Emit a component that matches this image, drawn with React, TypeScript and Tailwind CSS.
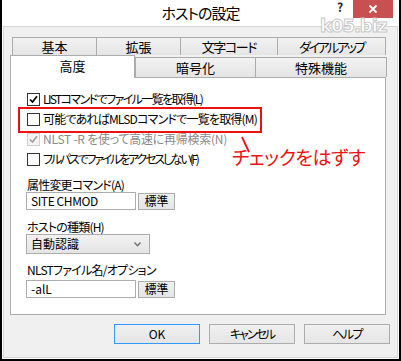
import React from 'react';

const font = "font-['Meiryo_UI','Noto_Sans_CJK_JP',sans-serif] [font-feature-settings:'palt']";

function Check({ checked, disabled }: { checked?: boolean; disabled?: boolean }) {
  return (
    <span
      className={`w-[13px] h-[13px] border shrink-0 flex items-center justify-center ${
        disabled ? 'border-[#d0d0d0] bg-[#f4f4f4]' : 'border-[#333333] bg-white'
      }`}
    >
      {checked && (
        <svg width="9" height="9" viewBox="0 0 9 9">
          <path d="M1 4.5 L3.5 7 L8 1.2" stroke={disabled ? '#a0a0a0' : '#000'} strokeWidth="1.7" fill="none" />
        </svg>
      )}
    </span>
  );
}

function Tab({ label, w, active, track = '' }: { label: string; w: string; active?: boolean; track?: string }) {
  return (
    <div
      className={`${w} ${track} -ml-px first:ml-0 border border-b-0 border-[#acacac] flex items-center justify-center text-[13px] text-black ${
        active ? 'h-[23px] bg-white relative z-10 -mb-px pb-[3px]' : 'h-full bg-gradient-to-b from-[#f2f2f2] to-[#e5e5e5]'
      }`}
    >
      {label}
    </div>
  );
}

function Btn({ label, w, focus, track = '' }: { label: string; w: string; focus?: boolean; track?: string }) {
  return (
    <div
      className={`${w} ${track} border ${focus ? 'border-[#3399ff]' : 'border-[#acacac]'} bg-gradient-to-b from-[#f0f0f0] to-[#e5e5e5] flex items-center justify-center text-[12px] text-black`}
    >
      {label}
    </div>
  );
}

export default function App() {
  return (
    <div className={`w-[401px] h-[361px] bg-white border-l-2 border-r-2 border-b-2 border-black flex flex-col relative ${font}`}>
      <div className="h-[26px] flex items-center justify-center text-[15px] tracking-[-1px] text-black shrink-0">
        ホストの設定
      </div>
      <span className="absolute left-[335px] top-0 text-[12px] leading-[14px] font-bold text-[#222]">?</span>
      <div className="absolute left-[351px] top-0 w-[40px] h-[18px] bg-[#c75050] flex items-center justify-center">
        <svg width="10" height="10" viewBox="0 0 10 10">
          <path d="M1.5 1.5 L8.5 8.5 M8.5 1.5 L1.5 8.5" stroke="#fff" strokeWidth="1.8" />
        </svg>
      </div>

      <div className="flex-1 mx-px mb-px border border-[#d6d6d6] bg-[#f0f0f0] flex flex-col">
        <div className="pl-[6px] pt-[10px]">
          <div className="flex h-[18px] ml-[2px]">
            <Tab label="基本" w="w-[85px]" />
            <Tab label="拡張" w="w-[85px]" />
            <Tab label="文字コード" w="w-[98px]" track="tracking-[-1.4px]" />
            <Tab label="ダイアルアップ" w="w-[109px]" track="tracking-[-2.4px]" />
          </div>
          <div className="flex items-end h-[22px]">
            <Tab label="高度" w="w-[125px]" active />
            <div className="flex h-[20px]">
              <Tab label="暗号化" w="w-[121px]" />
              <Tab label="特殊機能" w="w-[132px]" />
            </div>
          </div>
          <div className="w-[376px] h-[238px] bg-white border border-[#acacac] relative pt-[11px] pl-[16px] text-[12px] text-black">
            <div className="h-[20px] flex items-center gap-[3px]">
              <Check checked />
              <span className="tracking-[-1.6px]">LISTコマンドでファイル一覧を取得(L)</span>
            </div>
            <div className="h-[20px] flex items-center gap-[3px]">
              <Check />
              <span className="tracking-[-0.8px]">可能であればMLSDコマンドで一覧を取得(M)</span>
            </div>
            <div className="h-[20px] flex items-center gap-[3px] text-[#8a8a8a]">
              <Check checked disabled />
              <span className="tracking-[-0.25px]">NLST -R を使って高速に再帰検索(N)</span>
            </div>
            <div className="h-[20px] flex items-center gap-[3px]">
              <Check />
              <span className="tracking-[-2.2px]">フルパスでファイルをアクセスしない(F)</span>
            </div>

            <div className="mt-[8px] h-[15px] leading-[15px] tracking-[-0.8px]">属性変更コマンド(A)</div>
            <div className="h-[18px] flex items-center -ml-px">
              <div className="w-[110px] h-[18px] border border-[#abadb3] bg-white pl-[4px] leading-[16px] tracking-[-0.4px]">SITE CHMOD</div>
              <div className="ml-[2px]">
                <Btn label="標準" w="w-[37px] h-[17px]" />
              </div>
            </div>

            <div className="mt-[9px] h-[15px] leading-[15px] tracking-[-0.8px]">ホストの種類(H)</div>
            <div className="-ml-px w-[124px] h-[20px] border border-[#acacac] bg-gradient-to-b from-[#f2f2f2] to-[#e5e5e5] flex items-center justify-between pl-[4px] pr-[8px]">
              <span>自動認識</span>
              <svg width="7" height="5" viewBox="0 0 7 5">
                <path d="M0.5 0.5 L3.5 3.8 L6.5 0.5" stroke="#6d6d6d" strokeWidth="1.3" fill="none" />
              </svg>
            </div>

            <div className="mt-[8px] h-[15px] leading-[15px] tracking-[-0.75px]">NLSTファイル名/オプション</div>
            <div className="mt-[3px] h-[18px] flex items-center -ml-px">
              <div className="w-[110px] h-[18px] border border-[#abadb3] bg-white pl-[4px] leading-[16px]">-alL</div>
              <div className="ml-[2px]">
                <Btn label="標準" w="w-[37px] h-[17px]" />
              </div>
            </div>

            <div className="absolute left-[7px] top-[29px] w-[244px] h-[26px] border-2 border-[#ee1111]" />
            <svg className="absolute left-[228px] top-[57px]" width="14" height="20" viewBox="0 0 14 20">
              <path d="M3 2 L10 17" stroke="#ee1111" strokeWidth="1.8" />
            </svg>
            <div className="absolute left-[221px] top-[68px] text-[19px] leading-[22px] tracking-[-0.4px] text-[#ee1111]">
              チェックをはずす
            </div>
          </div>
        </div>
        <div className="mt-[9px] flex justify-end gap-[9px] pr-[7px]">
          <Btn label="OK" w="w-[86px] h-[20px]" focus />
          <Btn label="キャンセル" w="w-[86px] h-[20px]" track="tracking-[-2px]" />
          <Btn label="ヘルプ" w="w-[86px] h-[20px]" track="tracking-[-1.6px]" />
        </div>
      </div>

      <div className="absolute left-[318px] top-[18px] text-[18px] leading-[16px] font-bold tracking-[-1px] text-white [-webkit-text-stroke:1px_#c8c8c8] font-['DejaVu_Sans',sans-serif]">
        k05.biz
      </div>
    </div>
  );
}
